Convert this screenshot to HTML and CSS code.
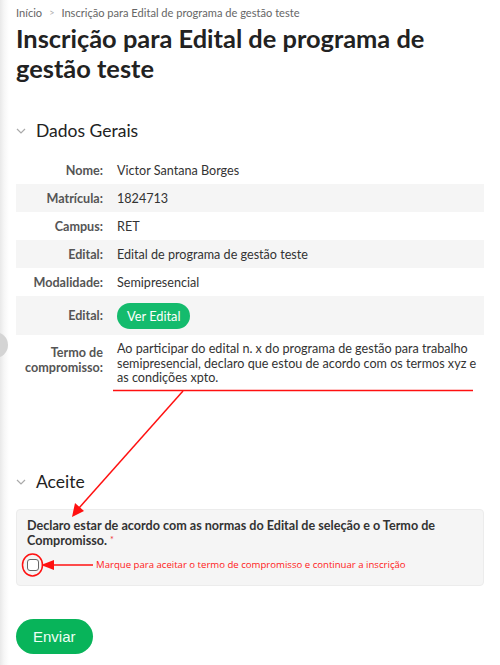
FILE: index.html
```html
<!DOCTYPE html>
<html lang="pt-BR">
<head>
<meta charset="utf-8">
<title>Inscrição para Edital de programa de gestão teste</title>
<link rel="stylesheet" href="styles.css">
</head>
<body>
<div class="side-toggle"></div>
<main class="page">
  <nav class="crumbs"><span>Início</span><span class="sep">&gt;</span><span>Inscrição para Edital de programa de gestão teste</span></nav>
  <h1 class="title">Inscrição para Edital de programa de gestão teste</h1>

  <h2 class="section"><svg class="chev" viewBox="0 0 10 6" width="10" height="6"><polyline points="1,1 5,5 9,1" fill="none" stroke="#aaa" stroke-width="1.2"/></svg>Dados Gerais</h2>
  <div class="data">
    <div class="row"><div class="lbl">Nome:</div><div class="val">Victor Santana Borges</div></div>
    <div class="row alt"><div class="lbl">Matrícula:</div><div class="val">1824713</div></div>
    <div class="row"><div class="lbl">Campus:</div><div class="val">RET</div></div>
    <div class="row alt"><div class="lbl">Edital:</div><div class="val">Edital de programa de gestão teste</div></div>
    <div class="row"><div class="lbl">Modalidade:</div><div class="val">Semipresencial</div></div>
    <div class="row alt btnrow"><div class="lbl">Edital:</div><div class="val"><span class="pill">Ver Edital</span></div></div>
    <div class="row termo"><div class="lbl">Termo de compromisso:</div><div class="val">Ao participar do edital n. x do programa de gestão para trabalho semipresencial, declaro que estou de acordo com os termos xyz e as condições xpto.</div></div>
  </div>

  <h2 class="section aceite"><svg class="chev" viewBox="0 0 10 6" width="10" height="6"><polyline points="1,1 5,5 9,1" fill="none" stroke="#aaa" stroke-width="1.2"/></svg>Aceite</h2>
  <div class="box">
    <p class="decl">Declaro estar de acordo com as normas do Edital de seleção e o Termo de Compromisso. <span class="req">*</span></p>
    <div class="checkline"><span class="check"></span><span class="hint">Marque para aceitar o termo de compromisso e continuar a inscrição</span></div>
  </div>

  <div class="actions"><span class="send">Enviar</span></div>
</main>
<svg class="annot" width="500" height="665" viewBox="0 0 500 665">
  <line x1="113" y1="390.5" x2="473" y2="390.5" stroke="#ff1010" stroke-width="1.5"/>
  <line x1="183" y1="391" x2="79" y2="508" stroke="#ff1010" stroke-width="1.5"/>
  <polygon points="72,517 75,503 84,511" fill="#ff1010"/>
  <ellipse cx="32.5" cy="565" rx="10" ry="11" fill="none" stroke="#ff1010" stroke-width="1.5"/>
  <line x1="93" y1="565" x2="50" y2="565" stroke="#ff1010" stroke-width="1.5"/>
  <polygon points="41,565 54,560 54,570" fill="#ff1010"/>
</svg>
</body>
</html>
```

FILE: styles.css
```css
html, body {
  margin: 0;
  padding: 0;
}
body {
  font-family: Lato, "Open Sans", sans-serif;
  color: #333;
  background: #fff linear-gradient(to right, #e9e9e9 0, #f6f6f6 4px, #fff 9px) no-repeat;
  background-size: 9px 100%;
  min-height: 665px;
  position: relative;
}
.side-toggle {
  position: absolute;
  left: -18px;
  top: 332px;
  width: 26px;
  height: 26px;
  border-radius: 50%;
  background: #d4d4d4;
}
.page {
  padding: 6px 16px 0 16px;
}
.crumbs {
  font-size: 11.1px;
  line-height: 14px;
  color: #666;
  display: flex;
  gap: 7px;
}
.crumbs .sep {
  color: #aaa;
  font-size: 9px;
}
.title {
  margin: 3px 0 0 0;
  font-size: 25.4px;
  line-height: 30px;
  font-weight: 700;
  color: #222;
}
.section {
  margin: 36px 0 0 0;
  font-size: 17.5px;
  line-height: 24px;
  font-weight: 400;
  color: #222;
  display: flex;
  align-items: center;
}
.chev {
  margin: 0 10px 0 0;
}
.data {
  margin-top: 13px;
}
.row {
  display: grid;
  grid-template-columns: 87px 1fr;
  column-gap: 14px;
  align-items: center;
  min-height: 28px;
  font-size: 12.6px;
}
.row.alt {
  background: #f5f5f5;
}
.lbl {
  text-align: right;
  font-weight: 700;
  color: #555;
}
.val {
  color: #333;
  padding-right: 6px;
}
.btnrow {
  min-height: 39px;
}
.pill {
  display: inline-block;
  background: #14bb6d;
  color: #fff;
  padding: 0 10px;
  height: 26px;
  line-height: 26px;
  border-radius: 13px;
  font-size: 12.8px;
}
.termo {
  padding: 7px 0 8px 0;
  align-items: start;
}
.termo .lbl {
  line-height: 15px;
  padding-top: 3px;
}
.termo .val {
  line-height: 14.5px;
}
.aceite {
  margin-top: 76px;
}
.box {
  margin-top: 15px;
  background: #f5f5f5;
  border: 1px solid #ececec;
  border-radius: 4px;
  padding: 8px 10px 13px 10px;
}
.decl {
  margin: 0;
  font-size: 12.6px;
  line-height: 15px;
  font-weight: 700;
  color: #333;
}
.req {
  color: #e33;
  font-weight: 400;
  font-size: 9px;
  line-height: 1;
  vertical-align: 2px;
}
.checkline {
  display: flex;
  align-items: center;
  margin-top: 10px;
  height: 14px;
}
.check {
  width: 10px;
  height: 10px;
  border: 1.5px solid #666;
  border-radius: 3px;
  background: #fff;
  box-sizing: content-box;
}
.hint {
  margin-left: 57px;
  font-family: "Open Sans", sans-serif;
  font-size: 9.6px;
  color: #ff2020;
}
.actions {
  margin-top: 33px;
}
.send {
  display: inline-block;
  background: #08b45a;
  color: #eefff4;
  font-family: "Liberation Sans", Arial, sans-serif;
  font-size: 15px;
  height: 35px;
  line-height: 35px;
  padding: 0 17px;
  border-radius: 18px;
}
.annot {
  position: absolute;
  left: 0;
  top: 0;
  pointer-events: none;
}
```
